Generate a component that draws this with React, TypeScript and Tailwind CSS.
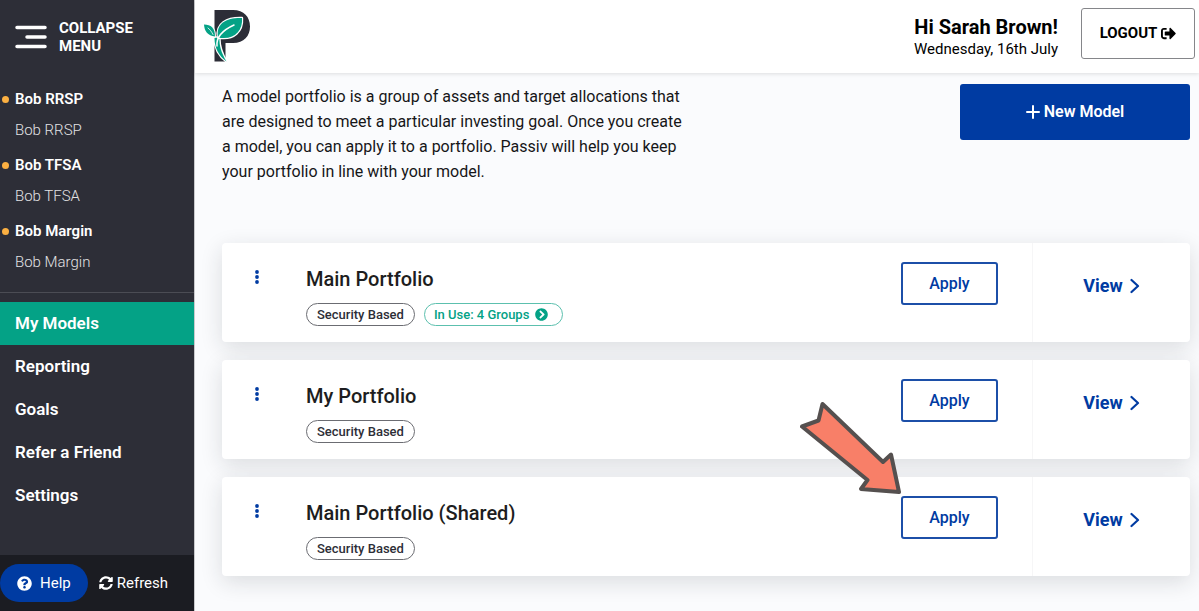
import { FaChevronCircleRight, FaQuestionCircle, FaSignOutAlt, FaSyncAlt } from 'react-icons/fa';

type Account = { group: string; account: string };
type Model = { name: string; type: string; groups?: number };

const accounts: Account[] = [
  { group: 'Bob RRSP', account: 'Bob RRSP' },
  { group: 'Bob TFSA', account: 'Bob TFSA' },
  { group: 'Bob Margin', account: 'Bob Margin' },
];

const pages = ['My Models', 'Reporting', 'Goals', 'Refer a Friend', 'Settings'];

const models: Model[] = [
  { name: 'Main Portfolio', type: 'Security Based', groups: 4 },
  { name: 'My Portfolio', type: 'Security Based' },
  { name: 'Main Portfolio (Shared)', type: 'Security Based' },
];

function Logo() {
  return (
    <svg viewBox="0 0 48 54" className="h-[54px] w-12" role="img" aria-label="Passiv">
      <path
        fill="#2c2d37"
        fillRule="evenodd"
        d="M11.500 1H30C41 1 47 8 47 17.500C47 27 41 34 30 34H22.500V52.500H11.500ZM22.500 11V25H29C33.500 25 35.500 22 35.500 18C35.500 14 33.500 11 29 11Z"
      />
      <g stroke="#fff" strokeLinejoin="round" strokeLinecap="round">
        <path
          d="M11.500 29C11.500 39 16 47 23.500 52.500C18.500 44 16 37 16.500 28Z"
          fill="#04a286"
          strokeWidth="2.400"
          paintOrder="stroke"
        />
        <path
          d="M15 28.500C12.500 14 24 8.500 39 9C40 22 31 31.500 15 28.500Z"
          fill="#04a286"
          strokeWidth="2.400"
          paintOrder="stroke"
        />
        <path
          d="M12 27.500C4.500 26.500 1.500 22.500 1 15.500C8 15.500 12 19 12 27.500Z"
          fill="#04a286"
          strokeWidth="2"
          paintOrder="stroke"
        />
        <path d="M14 37C13 27 20 21 31 16" fill="none" strokeWidth="1.500" />
        <path d="M10 25.500C8.500 22.500 7 20.500 5 19" fill="none" strokeWidth="0.800" />
      </g>
    </svg>
  );
}

function Sidebar() {
  return (
    <aside className="flex w-[195px] shrink-0 flex-col border-r border-[#c9cacd] bg-[#2d2e37] text-white">
      <button type="button" className="flex items-center gap-3 px-[15px] pt-[19px] text-left">
        <svg viewBox="0 0 32 24" className="h-6 w-8" aria-hidden="true">
          <path d="M2 2.500H30M12 12H30M2 21.500H30" stroke="#fff" strokeWidth="3.500" strokeLinecap="round" />
        </svg>
        <span className="text-[15px] leading-[18px] font-bold">
          COLLAPSE
          <br />
          MENU
        </span>
      </button>

      <ul className="mt-[29px] flex flex-col gap-1">
        {accounts.map((item) => (
          <li key={item.group}>
            <a href="#group" className="flex h-[31px] items-center gap-[6px] pl-[2px] text-[15px] font-semibold">
              <span className="size-[7px] rounded-full bg-[#fbb042]" />
              {item.group}
            </a>
            <a href="#account" className="flex h-[31px] items-center pl-[15px] text-[15px] font-light text-[#e2e2e4]">
              {item.account}
            </a>
          </li>
        ))}
      </ul>

      <nav className="mt-[14px] border-t border-[#4b4c54] pt-[9px]">
        {pages.map((page, index) => (
          <a
            key={page}
            href="#page"
            aria-current={index === 0 ? 'page' : undefined}
            className="flex h-[43px] items-center pl-[15px] text-[17px] font-semibold aria-[current=page]:bg-[#04a286]"
          >
            {page}
          </a>
        ))}
      </nav>

      <div className="mt-auto flex h-14 items-center gap-[11px] bg-[#1b1c22] text-[15px]">
        <button type="button" className="flex h-[38px] items-center gap-2 rounded-full bg-[#003ba2] px-[17px]">
          <FaQuestionCircle className="size-[15px]" />
          Help
        </button>
        <button type="button" className="flex items-center gap-1">
          <FaSyncAlt className="size-[14px]" />
          Refresh
        </button>
      </div>
    </aside>
  );
}

function Header() {
  return (
    <header className="relative flex h-[73px] items-start justify-between bg-white pt-2 pr-1 pl-2 shadow-[0_1px_4px_rgba(0,0,0,0.12)]">
      <div className="pt-px">
        <Logo />
      </div>
      <div className="flex gap-[23px]">
        <div className="pt-[5px] text-right text-black">
          <p className="text-xl leading-7 font-bold">Hi Sarah Brown!</p>
          <p className="text-[15px] leading-4">Wednesday, 16th July</p>
        </div>
        <button
          type="button"
          className="flex h-[51px] w-[114px] items-center justify-center gap-1 rounded-[3px] border border-[#85868a] text-[15px] font-bold text-black"
        >
          LOGOUT
          <FaSignOutAlt className="size-[15px]" />
        </button>
      </div>
    </header>
  );
}

function ModelCard({ model }: { model: Model }) {
  return (
    <li className="flex h-[99px] rounded-[4px] bg-white shadow-[0_6px_22px_rgba(30,32,40,0.14)]">
      <div className="flex w-[84px] shrink-0 justify-start pt-[22px] pl-[29px]">
        <button type="button" aria-label={`Options for ${model.name}`} className="flex h-6 w-3 items-center justify-center">
          <svg viewBox="0 0 4 16" className="h-4 w-1" aria-hidden="true">
            <g fill="#003ba2">
              <circle cx="2" cy="3" r="1.900" />
              <circle cx="2" cy="8" r="1.900" />
              <circle cx="2" cy="13" r="1.900" />
            </g>
          </svg>
        </button>
      </div>
      <div className="flex-1 pt-[22px]">
        <h2 className="text-xl leading-7 font-medium text-[#1d1d20]">{model.name}</h2>
        <div className="mt-[10px] flex gap-[9px] text-[13px] font-medium">
          <span className="flex h-[23px] items-center rounded-full border border-[#6b6c72] px-[10px] text-[#2d2e37]">
            {model.type}
          </span>
          {model.groups !== undefined && (
            <a
              href="#groups"
              className="flex h-[23px] items-center gap-[6px] rounded-full border border-[#5cc0ae] pr-[14px] pl-[9px] text-[#04a286]"
            >
              In Use: {model.groups} Groups
              <FaChevronCircleRight className="size-[13px]" />
            </a>
          )}
        </div>
      </div>
      <div className="pt-[19px] pr-[34px]">
        <button
          type="button"
          className="h-[43px] w-[97px] rounded-[3px] border-2 border-[#1c4fa8] text-base font-medium text-[#003ba2]"
        >
          Apply
        </button>
      </div>
      <a
        href="#view"
        className="flex w-[158px] items-center justify-center gap-[7px] border-l border-[#f6f6f7] pb-[14px] text-lg font-bold text-[#003ba2]"
      >
        View
        <svg viewBox="0 0 10 16" className="h-4 w-[10px]" aria-hidden="true">
          <path d="M1.500 2L8 8L1.500 14" fill="none" stroke="currentColor" strokeWidth="2.200" strokeLinecap="round" strokeLinejoin="round" />
        </svg>
      </a>
    </li>
  );
}

function PointerArrow() {
  return (
    <svg viewBox="0 0 102 94" className="pointer-events-none absolute -top-[77px] right-[288px] h-[94px] w-[102px]" aria-hidden="true">
      <path
        d="M22.500 4L83 62L91 54.500L99 92L61 89L67.500 80L2 26.500L18.500 20.500Z"
        fill="#f87f68"
        stroke="#55504f"
        strokeWidth="4"
        strokeLinejoin="round"
      />
    </svg>
  );
}

export default function App() {
  return (
    <div className="flex min-h-screen bg-[#fafbfd] font-['Roboto',sans-serif]">
      <Sidebar />
      <div className="flex min-w-0 flex-1 flex-col">
        <Header />
        <main className="pt-[11px] pr-[9px] pl-[27px]">
          <div className="flex items-start justify-between">
            <p className="w-[470px] text-base leading-[25px] text-[#161618]">
              A model portfolio is a group of assets and target allocations that are designed to meet a particular
              investing goal. Once you create a model, you can apply it to a portfolio. Passiv will help you keep your
              portfolio in line with your model.
            </p>
            <button
              type="button"
              className="flex h-14 w-[230px] items-center justify-center gap-1 rounded-[3px] bg-[#003ba2] text-base font-semibold text-white"
            >
              <svg viewBox="0 0 14 14" className="size-[14px]" aria-hidden="true">
                <path d="M7 1V13M1 7H13" stroke="currentColor" strokeWidth="2" strokeLinecap="round" />
              </svg>
              New Model
            </button>
          </div>
          <div className="relative mt-[59px]">
            <ul className="flex flex-col gap-[18px]">
              {models.map((model) => (
                <ModelCard key={model.name} model={model} />
              ))}
            </ul>
            <div className="absolute right-0 bottom-[99px] h-0 w-0">
              <PointerArrow />
            </div>
          </div>
        </main>
      </div>
    </div>
  );
}
